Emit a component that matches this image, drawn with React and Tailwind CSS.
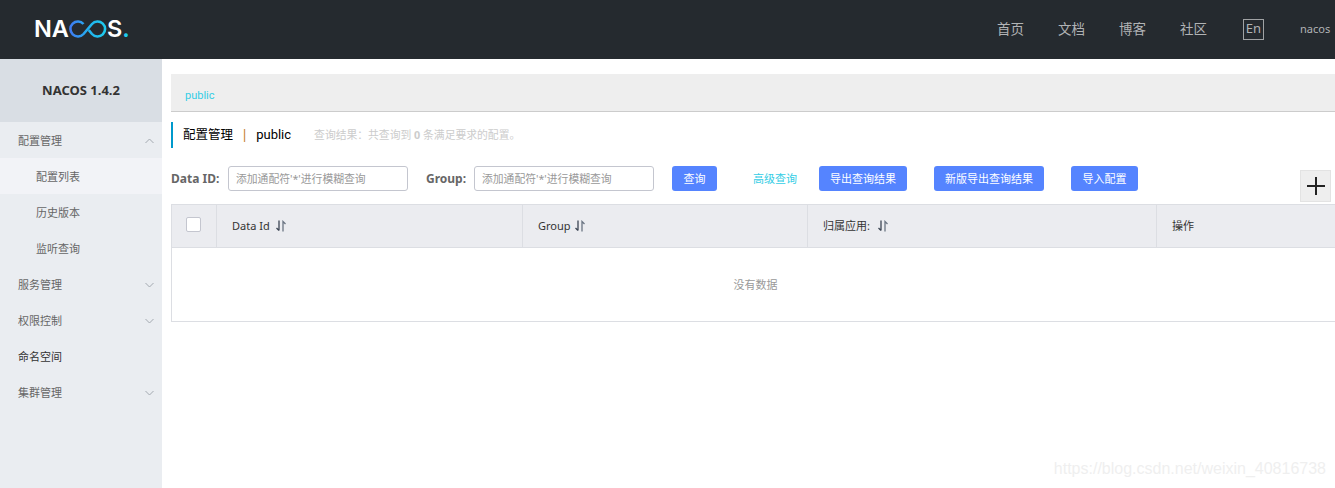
import React from "react";

const cjk = "font-['Noto_Sans','Noto_Sans_CJK_SC',sans-serif]";
const bold = "font-['Noto_Sans','Noto_Sans_CJK_SC',sans-serif] font-bold";
const latin = "font-['Roboto','Noto_Sans_CJK_SC',sans-serif]";

const navLinks = ["首页", "文档", "博客", "社区"];

const menu = [
  { label: "配置管理", arrow: "up" },
  { label: "配置列表", sub: true, active: true },
  { label: "历史版本", sub: true },
  { label: "监听查询", sub: true },
  { label: "服务管理", arrow: "down" },
  { label: "权限控制", arrow: "down" },
  { label: "命名空间", dark: true },
  { label: "集群管理", arrow: "down" },
];

const columns = [
  { label: "Data Id", width: "w-[306px]", sort: true, gap: "gap-[6px]" },
  { label: "Group", width: "w-[285px]", sort: true, gap: "gap-[4px]" },
  { label: "归属应用:", width: "w-[349px]", sort: true, gap: "gap-[8px]" },
  { label: "操作", width: "w-[180px]" },
];

function Chevron({ dir }) {
  return (
    <svg width="9" height="6" viewBox="0 0 9 6" fill="none" stroke="#a3a9b0" strokeWidth="1">
      <path d={dir === "up" ? "M0.5 5 L4.5 1 L8.5 5" : "M0.5 1 L4.5 5 L8.5 1"} />
    </svg>
  );
}

function SortIcon() {
  return (
    <svg width="10" height="12" viewBox="0 0 10 12" fill="none" strokeWidth="1.3">
      <path d="M3 0.5 V10.5 M0.5 8 L3 10.5" stroke="#3c4654" />
      <path d="M7 11.5 V1.5 L9.5 4" stroke="#6a7482" />
    </svg>
  );
}

function Logo() {
  return (
    <div className="flex items-center h-[20px] text-white font-['Inter',sans-serif] font-semibold text-[23.5px] leading-none">
      <span>NA</span>
      <svg width="38" height="18" viewBox="0 0 38 18" fill="none" strokeWidth="2.6" className="shrink-0">
        <defs>
          <linearGradient id="nacos-g" x1="0" x2="1" y1="0" y2="0">
            <stop offset="0" stopColor="#3f7cf2" />
            <stop offset="0.55" stopColor="#22b4f0" />
            <stop offset="1" stopColor="#1ecbee" />
          </linearGradient>
        </defs>
        <path
          d="M14.5 4 A7.5 7.5 0 1 0 14.5 14 L23 4 A7.5 7.5 0 1 1 23 14 L19.8 10.2"
          stroke="url(#nacos-g)"
        />
      </svg>
      <span>S</span>
      <span className="text-[#1ecbee]">.</span>
    </div>
  );
}

function Button({ children, className }) {
  return (
    <button className={`h-[25px] shrink-0 rounded-[3px] bg-[#5584ff] text-white text-[11px] leading-none ${className}`}>
      {children}
    </button>
  );
}

function SearchInput() {
  return (
    <input
      placeholder="添加通配符'*'进行模糊查询"
      className="w-[180px] h-[25px] shrink-0 rounded-[3px] border border-[#c4c6cf] px-[7px] text-[10.8px] placeholder:text-[#999] outline-none"
    />
  );
}

export default function App() {
  return (
    <div className={`relative w-[1335px] h-[488px] overflow-hidden bg-white ${cjk}`}>
      <header className="h-[59px] bg-[#252a2f] flex items-center pl-[34px] pb-[1px]">
        <Logo />
        <nav className="ml-auto flex items-center text-[13.5px] text-[#b1b3b5]">
          {navLinks.map((link) => (
            <a key={link} className="w-[61px] text-center">
              {link}
            </a>
          ))}
          <span className="ml-[19px] w-[21px] h-[21px] border border-[#a0a2a4] flex items-center justify-center text-[13px]">
            En
          </span>
          <span className="ml-[36px] mr-[4px] w-[31px] text-[11px]">nacos</span>
        </nav>
      </header>

      <div className="flex h-[429px]">
        <aside className="w-[162px] shrink-0 bg-[#eaedf1]">
          <div className={`h-[63px] bg-[#d9dee4] flex items-center justify-center text-[13px] text-[#333] ${bold}`}>
            NACOS 1.4.2
          </div>
          <ul className="text-[11px]">
            {menu.map((item) => (
              <li
                key={item.label}
                className={`h-[36px] pt-[2px] flex items-center justify-between pr-[8px] ${item.sub ? "pl-[36px]" : "pl-[18px]"} ${
                  item.active ? "bg-[#f2f3f7]" : ""
                } ${item.dark ? "text-[#333]" : "text-[#666]"}`}
              >
                <span>{item.label}</span>
                {item.arrow && <Chevron dir={item.arrow} />}
              </li>
            ))}
          </ul>
        </aside>

        <main className="flex-1 min-w-0 pt-[15px] pl-[9px]">
          <div className={`h-[38px] bg-[#eee] border-b border-[#ccc] pl-[14px] pt-[13px] text-[11px] leading-[17px] text-[#33cde5] ${latin}`}>
            public
          </div>

          <div className="mt-[10px] h-[26px] border-l-2 border-[#09c] pl-[10px] flex items-center">
            <span className="text-[12.5px] text-black">配置管理</span>
            <span className="mx-[8px] text-[13px] text-[#c1781c]">|</span>
            <span className={`text-[13px] text-black ${latin}`}>public</span>
            <span className="ml-[23px] text-[10.8px] text-[#ccc]">
              查询结果：共查询到 <b className="font-bold">0</b> 条满足要求的配置。
            </span>
          </div>

          <div className="mt-[18px] h-[38px] flex items-start">
            <label className={`w-[57px] h-[25px] shrink-0 flex items-center text-[12px] text-[#666] ${bold}`}>
              Data ID:
            </label>
            <SearchInput />
            <label className={`ml-[18px] w-[48px] h-[25px] shrink-0 flex items-center text-[12px] text-[#666] ${bold}`}>
              Group:
            </label>
            <SearchInput />
            <Button className="ml-[18px] w-[45px]">查询</Button>
            <a className="ml-[36px] h-[25px] w-[44px] shrink-0 pt-[1px] flex items-center text-[11px] text-[#33cde5] whitespace-nowrap">
              高级查询
            </a>
            <Button className="ml-[22px] w-[88px]">导出查询结果</Button>
            <Button className="ml-[27px] w-[110px]">新版导出查询结果</Button>
            <Button className="ml-[27px] w-[67px]">导入配置</Button>
            <button className="mt-[4px] ml-auto mr-[4px] w-[31px] h-[32px] bg-[#eee] border border-[#e3e3e3] flex items-center justify-center">
              <svg width="18" height="18" viewBox="0 0 18 18" stroke="#222" strokeWidth="2">
                <path d="M9 0 V18 M0 9 H18" />
              </svg>
            </button>
          </div>

          <div className="w-[1300px] h-[118px] border border-[#dcdee3] text-[12px] text-[#333]">
            <div className="flex h-[43px] bg-[#ebecf0] border-b border-[#dcdee3]">
              <div className="w-[45px] shrink-0 border-r border-[#dcdee3] pr-[2px] flex items-center justify-center">
                <span className="-mt-[3px] w-[15px] h-[15px] rounded-[2px] bg-white border border-[#c4c6cf]" />
              </div>
              {columns.map((col) => (
                <div
                  key={col.label}
                  className={`${col.width} shrink-0 border-r border-[#dcdee3] pl-[15px] flex items-center ${col.gap || ""}`}
                >
                  <span className="text-[11px]">{col.label}</span>
                  {col.sort && <SortIcon />}
                </div>
              ))}
            </div>
            <div className="w-[1167px] h-[73px] pt-[2px] flex items-center justify-center text-[#999] text-[11px]">没有数据</div>
          </div>
        </main>
      </div>

      <span className="absolute right-[9px] top-[458px] font-['Liberation_Sans',sans-serif] text-[16px] leading-[22px] text-[#efefef]">
        https://blog.csdn.net/weixin_40816738
      </span>
    </div>
  );
}
